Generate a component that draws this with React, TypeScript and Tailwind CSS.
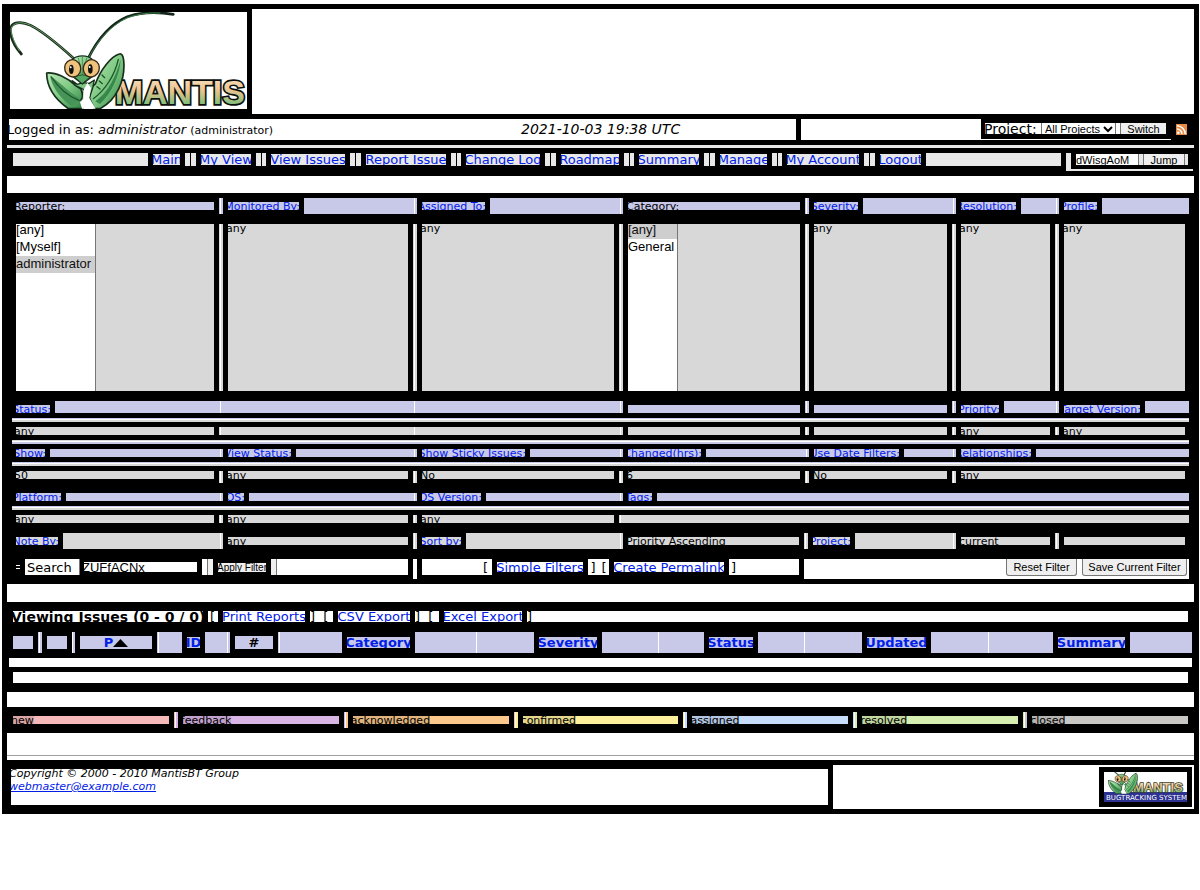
import React from "react";

type Kids = { children?: React.ReactNode; className?: string };

const LAV = "bg-[#c8c8e8]";
const GREY = "bg-[#d8d8d8]";

/* Text set in a tight box that crops it on every side */
function Tag({ children, className = "" }: Kids) {
  return (
    <div className={`overflow-hidden border-l-[5px] border-black ${className}`}>
      <div className="-indent-0.5 flex h-full items-center whitespace-nowrap">
        <span>{children}</span>
      </div>
    </div>
  );
}

function LinkTag({ children, className = "" }: Kids) {
  return (
    <div className={`overflow-hidden border-l-[5px] border-black ${className}`}>
      <div className="flex h-full items-center justify-center whitespace-nowrap">
        <a href="#" className="text-[#0020e8]">
          {children}
        </a>
      </div>
    </div>
  );
}

/* Filter heading, aligned on its closing colon */
function Label({ children, className = "" }: Kids) {
  return (
    <div className={`overflow-hidden border-l-[5px] border-black ${className}`}>
      <div className="-mr-px flex h-full items-center justify-end whitespace-nowrap">
        <a href="#" className="text-[#0020e8]">
          {children}
        </a>
      </div>
    </div>
  );
}

/* Filled stretch that ends in a white hairline */
function Fill({ className = "", gap = true, line = true }: { className?: string; gap?: boolean; line?: boolean }) {
  return (
    <div className={`flex justify-end overflow-hidden border-black ${gap ? "border-l-[5px]" : ""} ${className}`}>
      {line && <i className="w-[3px] border-l border-white" />}
    </div>
  );
}

function Row({ children, className = "" }: Kids) {
  return <div className={`grid pl-[9px] pr-2.5 text-[11px] leading-none ${className}`}>{children}</div>;
}

const PLAIN =
  "grid-cols-[203fr_9fr_185fr_9fr_197fr_9fr_177fr_9fr_138fr_9fr_94fr_9fr_126fr_4fr]";

function Thin({ top, bottom }: { top: string; bottom: string }) {
  return (
    <div className="mx-2.5 mt-[5px] h-1">
      <div className={`h-px ${top}`} />
      <div className="h-px bg-white" />
      <div className={`h-0.5 ${bottom}`} />
    </div>
  );
}

function Mantis() {
  return (
    <g strokeLinejoin="round" strokeLinecap="round">
      <path d="M222 176C180 138 132 96 92 76C62 62 34 66 31 88C31 118 48 144 64 162" fill="none" stroke="#1c2a1c" strokeWidth="8" />
      <path d="M222 176C180 138 132 96 92 76C62 62 36 68 33 88C35 112 48 138 58 152" fill="none" stroke="#5d9c62" strokeWidth="3" />
      <path d="M263 178C292 118 330 72 382 50C430 34 478 36 520 43" fill="none" stroke="#14251a" strokeWidth="8" />
      <path d="M264 176C294 120 332 76 382 53C420 40 450 38 480 39" fill="none" stroke="#3c8048" strokeWidth="3" />
      <path d="M140 219C166 216 204 234 227 257L243 267L250 293L243 298L250 326H205C174 304 140 268 140 219Z" fill="url(#leaf)" stroke="#17301c" strokeWidth="5" />
      <path d="M151 228C180 246 210 282 242 296L216 318C190 304 154 262 151 228Z" fill="#469457" />
      <path d="M154 231C180 270 208 290 238 302" fill="none" stroke="#1b5429" strokeWidth="4" />
      <path d="M358 162C334 168 301 210 286 252L273 264L268 294L283 326H300C350 300 377 240 371 181C370 167 365 160 358 162Z" fill="url(#leaf)" stroke="#17301c" strokeWidth="5" />
      <path d="M362 178C360 222 336 280 300 312L286 304C326 278 350 224 362 178Z" fill="#35874a" />
      <path d="M355 178C344 226 316 270 280 296M306 225l8 8M298 243l9 8M291 260l9 7" fill="none" stroke="#1b5429" strokeWidth="4" />
      <path d="M216 242L232 253L249 248L268 250L283 240L278 264L268 294L283 326L259 300L244 307L250 268L227 257Z" fill="#7fc585" stroke="#17301c" strokeWidth="4" />
      <path d="M250 272L262 248L273 264L268 294L287 326H246L240 306L250 296Z" fill="#fff" />
      <path d="M218 178C232 164 263 165 276 178L276 230L247 252L221 232Z" fill="url(#leaf)" stroke="#17301c" strokeWidth="4" />
      <path d="M247 170V226M235 174Q243 196 243 224M260 174Q252 196 252 224" fill="none" stroke="#26733a" strokeWidth="2" />
      <path d="M225 230Q246 220 271 230L247 250Z" fill="#55a962" stroke="#17301c" strokeWidth="2" />
      <ellipse cx="218" cy="205" rx="24" ry="26" transform="rotate(-18 218 205)" fill="#efc37b" stroke="#382716" strokeWidth="4" />
      <ellipse cx="274" cy="205" rx="24" ry="26" transform="rotate(18 274 205)" fill="#efc37b" stroke="#382716" strokeWidth="4" />
      <ellipse cx="214" cy="208" rx="7" ry="14" fill="#111" />
      <ellipse cx="271" cy="207" rx="7" ry="14" fill="#111" />
      <circle cx="212" cy="202" r="3" fill="#fff" />
      <circle cx="269" cy="201" r="3" fill="#fff" />
    </g>
  );
}

function Defs() {
  return (
    <defs>
      <linearGradient id="leaf" x1="0" y1="0" x2="1" y2="1">
        <stop offset="0" stopColor="#b9e8b6" />
        <stop offset=".5" stopColor="#80c984" />
        <stop offset="1" stopColor="#2f8345" />
      </linearGradient>
      <linearGradient id="word" x1="0" y1="0" x2="0" y2="1">
        <stop offset=".15" stopColor="#f6dcb8" />
        <stop offset=".45" stopColor="#edc491" />
        <stop offset=".85" stopColor="#78bd79" />
      </linearGradient>
    </defs>
  );
}

function Logo() {
  return (
    <svg viewBox="30 36 711 291" className="h-[97px] w-[237px] bg-white" role="img" aria-label="Mantis">
      <Defs />
      <text x="344" y="312" fontFamily="Liberation Sans, sans-serif" fontWeight="bold" fontSize="102" fill="url(#word)" stroke="#0b0f0b" strokeWidth="10" paintOrder="stroke">
        MANTIS
      </text>
      <Mantis />
    </svg>
  );
}

function SmallLogo() {
  return (
    <svg viewBox="0 0 83 30" className="h-[30px] w-[83px] bg-white" role="img" aria-label="Mantis Bugtracking System">
      <rect y="20" width="83" height="10" fill="#2c3192" />
      <text x="29" y="20" fontFamily="Liberation Sans, sans-serif" fontWeight="bold" fontSize="13" fill="url(#word)" stroke="#39452f" strokeWidth="1.6" paintOrder="stroke">
        MANTIS
      </text>
      <svg x="4" y="0" width="30" height="22" viewBox="138 150 238 178" preserveAspectRatio="none">
        <Mantis />
      </svg>
      <text x="2" y="28" fontFamily="DejaVu Sans, sans-serif" fontSize="7" fill="#fff">
        BUGTRACKING SYSTEM
      </text>
    </svg>
  );
}

const MENU: [string, string][] = [
  ["Main", "w-8"],
  ["My View", "w-[55px]"],
  ["View Issues", "w-[79px]"],
  ["Report Issue", "w-[85px]"],
  ["Change Log", "w-[79px]"],
  ["Roadmap", "w-[63px]"],
  ["Summary", "w-[65px]"],
  ["Manage", "w-[52px]"],
  ["My Account", "w-[77px]"],
  ["Logout", "w-[46px]"],
];

function Bars({ className }: { className: string }) {
  return (
    <span className={`flex h-full justify-center border-l-[5px] border-black bg-[#e8e8e8] ${className}`}>
      <i className="w-px bg-black" />
    </span>
  );
}

const STATUSES: [string, string, string, string][] = [
  ["new", "bg-[#f5b9b9]", "border-l-[#f5b9b9]", "border-r-[#f5b9b9]"],
  ["feedback", "bg-[#d9b5e5]", "border-l-[#d9b5e5]", "border-r-[#d9b5e5]"],
  ["acknowledged", "bg-[#fac98b]", "border-l-[#fac98b]", "border-r-[#fac98b]"],
  ["confirmed", "bg-[#fff09c]", "border-l-[#fff09c]", "border-r-[#fff09c]"],
  ["assigned", "bg-[#c6dcfb]", "border-l-[#c6dcfb]", "border-r-[#c6dcfb]"],
  ["resolved", "bg-[#d7f0b1]", "border-l-[#d7f0b1]", "border-r-[#d7f0b1]"],
  ["closed", "bg-[#c9c8c4]", "border-l-[#c9c8c4]", "border-r-[#c9c8c4]"],
];

function Header() {
  return (
    <header>
      <div className="flex h-[105px] pl-[5px] pr-[5px]">
        <div className="w-[245px] shrink-0 pl-[3px] pt-[3px]">
          <Logo />
        </div>
        <div className="flex-1 bg-white" />
      </div>

      <div className="mt-[5px] grid h-[21px] grid-cols-[787fr_403fr] pl-[7px]">
        <div className="grid grid-cols-[512fr_275fr] items-center overflow-hidden bg-white text-[13px] whitespace-nowrap">
          <div className="-indent-0.5">
            Logged in as: <em>administrator</em> <span className="text-[11px]">(administrator)</span>
          </div>
          <em className="text-[14px]">2021-10-03 19:38 UTC</em>
        </div>
        <div className="flex border-l-[5px] border-black">
          <form className="flex flex-1 border-b border-white">
            <div className="flex-1 bg-white" />
            <div className="mt-1 flex h-[11px] self-start pl-1">
              <label htmlFor="project" className="-indent-px flex w-14 items-center overflow-hidden bg-white text-[14px] leading-none">
                Project:
              </label>
              <div className="grid w-[75px] overflow-hidden border-x border-[#767676] bg-white">
                <select id="project" className="col-start-1 row-start-1 mt-px h-[11px] appearance-none pl-[3px] font-['Liberation_Sans'] text-[11px] leading-none">
                  <option>All Projects</option>
                </select>
                <svg viewBox="0 0 10 7" className="pointer-events-none col-start-1 row-start-1 mr-0.5 h-[7px] w-2.5 self-center justify-self-end">
                  <path d="M1 1l4 4 4-4" fill="none" stroke="#000" strokeWidth="2" />
                </svg>
              </div>
              <span className="w-[5px] border-r border-[#767676] bg-white" />
              <button type="button" className="flex w-[45px] items-center justify-center overflow-hidden bg-[#efefef] pt-px font-['Liberation_Sans'] text-[11px] leading-none">
                Switch
              </button>
              <i className="w-[5px]" />
            </div>
          </form>
          <a href="#" aria-label="RSS" className="mr-3 ml-[5px] mt-[5px] h-[11px] w-[11px]">
            <svg viewBox="0 0 11 11" className="h-[11px] w-[11px] bg-[#e98a45]">
              <circle cx="2.3" cy="8.8" r="1.3" fill="#fff" />
              <path d="M1 5a5 5 0 0 1 5 5M1 1.8a8.200 8.200 0 0 1 8.200 8.200" fill="none" stroke="#fff" strokeWidth="1.500" />
            </svg>
          </a>
        </div>
      </div>

      <div className="mx-[5px] mt-[5px] h-[3px] bg-[#e8e8e8]" />

      <div className="mt-[5px] flex h-[18px] pr-1.5 pl-[11px]">
        <nav className="flex h-[13px] flex-1 text-[13px] leading-none">
          <span className="flex-1 bg-[#e8e8e8]" />
          {MENU.map(([name, width], i) => (
            <React.Fragment key={name}>
              {i > 0 && <Bars className={i % 2 ? "w-4" : "w-[15px]"} />}
              <LinkTag className={`my-px bg-[#e8e8e8] ${width}`}>{name}</LinkTag>
            </React.Fragment>
          ))}
          <span className="flex-1 border-l-[5px] border-black bg-[#e8e8e8]" />
        </nav>
        <form className="ml-[5px] flex w-[127px] border-b-2 border-l-[5px] border-[#e8e8e8] pl-[5px]">
          <input aria-label="Issue number" defaultValue="dWisgAoM" className="mt-px h-[11px] w-[62px] bg-white font-['Liberation_Sans'] text-[11px] leading-none outline-none" />
          <span className="mt-px h-[11px] w-1.5 border-x border-[#767676] bg-[#e8e8e8]" />
          <button type="button" className="mt-px flex h-[11px] w-10 items-center justify-center bg-[#efefef] pt-px font-['Liberation_Sans'] text-[11px] leading-none">
            Jump
          </button>
          <span className="mt-px h-[11px] w-1 border-l border-[#767676] bg-[#e8e8e8]" />
        </form>
      </div>
      <div className="mx-[5px] mt-[5px] h-[17px] bg-white" />
    </header>
  );
}

function ListCell({ label, options, selected, className }: { label: string; options: string[]; selected: string; className: string }) {
  return (
    <div className="flex overflow-hidden border-l-[5px] border-black bg-[#d8d8d8]">
      <select
        multiple
        aria-label={label}
        defaultValue={[selected]}
        className={`-mt-0.5 h-[169px] shrink-0 appearance-none overflow-hidden border-r border-[#767676] bg-white font-['Liberation_Sans'] text-[13px] outline-none ${className}`}
      >
        {options.map((o) => (
          <option key={o} className="h-[17px] p-0 leading-[17px]">
            {o}
          </option>
        ))}
      </select>
    </div>
  );
}

function Filters() {
  const any = `${GREY} h-full`;
  const lab = `${LAV} my-1`;
  return (
    <section>
      <Row className="mt-[5px] h-4 grid-cols-[203fr_9fr_76fr_118fr_68fr_138fr_177fr_9fr_49fr_98fr_60fr_43fr_38fr_92fr]">
        <Tag className={lab}>Reporter:</Tag>
        <Fill className={LAV} />
        <Label className={lab}>Monitored By:</Label>
        <Fill className={LAV} />
        <Label className={lab}>Assigned To:</Label>
        <Fill className={LAV} />
        <Tag className={lab}>Category:</Tag>
        <Fill className={LAV} />
        <Label className={lab}>Severity:</Label>
        <Fill className={LAV} />
        <Label className={lab}>Resolution:</Label>
        <Fill className={LAV} />
        <Label className={lab}>Profile:</Label>
        <Fill className={LAV} line={false} />
      </Row>

      <Row className={`mt-2.5 h-[167px] ${PLAIN}`}>
        <ListCell label="Reporter" options={["[any]", "[Myself]", "administrator"]} selected="administrator" className="w-20" />
        <Fill className={GREY} />
        <Tag className={`${GREY} pb-[159px]`}>any</Tag>
        <Fill className={GREY} />
        <Tag className={`${GREY} pb-[159px]`}>any</Tag>
        <Fill className={GREY} />
        <ListCell label="Category" options={["[any]", "General"]} selected="[any]" className="w-[50px]" />
        <Fill className={GREY} />
        <Tag className={`${GREY} pb-[159px]`}>any</Tag>
        <Fill className={GREY} />
        <Tag className={`${GREY} pb-[159px]`}>any</Tag>
        <Fill className={GREY} />
        <Tag className={`${GREY} pb-[159px]`}>any</Tag>
      </Row>

      <Row className="mt-2.5 h-3 grid-cols-[39fr_173fr_194fr_206fr_177fr_9fr_138fr_9fr_43fr_60fr_81fr_49fr]">
        <Label className={`${LAV} mt-1`}>Status:</Label>
        <Fill className={LAV} />
        <Fill className={LAV} gap={false} />
        <Fill className={LAV} gap={false} />
        <Tag className={`${LAV} mt-1`} />
        <Fill className={LAV} />
        <Tag className={`${LAV} mt-1`} />
        <Fill className={LAV} />
        <Label className={`${LAV} mt-1`}>Priority:</Label>
        <Fill className={LAV} />
        <Label className={`${LAV} mt-1`}>Target Version:</Label>
        <Fill className={LAV} line={false} />
      </Row>
      <Thin top={LAV} bottom={GREY} />
      <Row className="mt-[5px] h-2 grid-cols-[203fr_9fr_194fr_206fr_177fr_9fr_138fr_9fr_94fr_9fr_126fr_4fr]">
        <Tag className={any}>any</Tag>
        <Fill className={GREY} />
        <Fill className={GREY} gap={false} />
        <Fill className={GREY} gap={false} />
        <Tag className={any} />
        <Fill className={GREY} />
        <Tag className={any} />
        <Fill className={GREY} />
        <Tag className={any}>any</Tag>
        <Fill className={GREY} />
        <Tag className={any}>any</Tag>
      </Row>
      <Thin top={GREY} bottom={LAV} />
      <Row className="mt-[5px] h-2 grid-cols-[34fr_178fr_68fr_126fr_108fr_98fr_78fr_108fr_90fr_57fr_75fr_158fr]">
        <Label className={LAV}>Show:</Label>
        <Fill className={LAV} />
        <Label className={LAV}>View Status:</Label>
        <Fill className={LAV} />
        <Label className={LAV}>Show Sticky Issues:</Label>
        <Fill className={LAV} />
        <Label className={LAV}>Changed(hrs):</Label>
        <Fill className={LAV} />
        <Label className={LAV}>Use Date Filters:</Label>
        <Fill className={LAV} />
        <Label className={LAV}>Relationships:</Label>
        <Fill className={LAV} line={false} />
      </Row>
      <Thin top={LAV} bottom={GREY} />
      <Row className="mt-[5px] h-3 grid-cols-[203fr_9fr_185fr_9fr_197fr_9fr_177fr_9fr_138fr_9fr_229fr_4fr]">
        <Tag className={`${GREY} mb-1`}>50</Tag>
        <Fill className={GREY} />
        <Tag className={`${GREY} mb-1`}>any</Tag>
        <Fill className={GREY} />
        <Tag className={`${GREY} mb-1`}>No</Tag>
        <Fill className={GREY} />
        <Tag className={`${GREY} mb-1`}>6</Tag>
        <Fill className={GREY} />
        <Tag className={`${GREY} mb-1`}>No</Tag>
        <Fill className={GREY} />
        <Tag className={`${GREY} mb-1`}>any</Tag>
      </Row>
      <Row className="mt-2.5 h-2 grid-cols-[50fr_162fr_21fr_173fr_64fr_142fr_29fr_537fr]">
        <Label className={LAV}>Platform:</Label>
        <Fill className={LAV} />
        <Label className={LAV}>OS:</Label>
        <Fill className={LAV} />
        <Label className={LAV}>OS Version:</Label>
        <Fill className={LAV} />
        <Label className={LAV}>Tags:</Label>
        <Fill className={LAV} line={false} />
      </Row>
      <Thin top={LAV} bottom={GREY} />
      <Row className="mt-[5px] h-2 grid-cols-[203fr_9fr_185fr_9fr_197fr_9fr_566fr]">
        <Tag className={any}>any</Tag>
        <Fill className={GREY} />
        <Tag className={any}>any</Tag>
        <Fill className={GREY} />
        <Tag className={any}>any</Tag>
        <Fill className={GREY} />
        <Fill className={GREY} gap={false} line={false} />
      </Row>
      <Row className="mt-2.5 h-4 grid-cols-[47fr_165fr_185fr_9fr_44fr_162fr_176fr_9fr_42fr_106fr_94fr_9fr_126fr_4fr]">
        <Label className={`${GREY} my-1`}>Note By:</Label>
        <Fill className={GREY} />
        <Tag className={`${GREY} my-1`}>any</Tag>
        <Fill className={GREY} />
        <Label className={`${GREY} my-1`}>Sort by:</Label>
        <Fill className={GREY} />
        <Tag className={`${GREY} my-1`}>Priority Ascending</Tag>
        <Fill className={GREY} />
        <Label className={`${GREY} my-1`}>Project:</Label>
        <Fill className={GREY} />
        <Tag className={`${GREY} my-1`}>current</Tag>
        <Fill className={GREY} />
        <Tag className={`${GREY} my-1`} />
      </Row>

      <form className="mt-2.5 grid h-5 grid-cols-[392fr_9fr_382fr_390fr] pr-2.5 pl-3.5 text-[13px] leading-none">
        <div className="flex h-4 overflow-hidden">
          <span className="flex w-[9px] shrink-0 items-center bg-black">
            <i className="h-1 w-1 border-y border-white" />
          </span>
          <label htmlFor="search" className="flex w-[55px] shrink-0 items-center border-r border-[#767676] bg-white pl-0.5">
            Search
          </label>
          <input id="search" defaultValue="ZUFfACNx" className="-indent-0.5 my-[3px] ml-1 h-2.5 w-[113px] shrink-0 bg-white font-['Liberation_Sans'] text-[13px] leading-none outline-none" />
          <span className="ml-[5px] w-1.5 shrink-0 border-r border-[#767676] bg-white" />
          <span className="w-[5px] shrink-0 bg-[#efefef]" />
          <button type="button" className="my-1 ml-[5px] flex h-[9px] w-12 shrink-0 items-center justify-center overflow-hidden bg-[#efefef] font-['Liberation_Sans'] text-[10px] leading-none whitespace-nowrap">
            Apply Filter
          </button>
          <span className="ml-[5px] w-1.5 shrink-0 border-r border-[#767676] bg-[#efefef]" />
          <span className="flex-1 bg-white" />
        </div>
        <div className="border-l-[5px] border-black bg-white" />
        <div className="flex h-4">
          <span className="flex flex-1 items-center justify-end border-l-[5px] border-black bg-white pr-1">[</span>
          <LinkTag className="my-[3px] w-[91px] bg-white">Simple Filters</LinkTag>
          <span className="flex w-[26px] items-center justify-center gap-1.5 border-l-[5px] border-black bg-white">
            <b className="font-normal">]</b>
            <b className="font-normal">[</b>
          </span>
          <LinkTag className="my-[3px] w-[115px] bg-white">Create Permalink</LinkTag>
          <span className="flex w-[75px] items-center border-l-[5px] border-black bg-white pl-0.5">]</span>
        </div>
        <div className="flex items-start justify-end gap-[5px] overflow-hidden border-l-[5px] border-black bg-white pr-0.5 font-['Liberation_Sans'] text-[11px]">
          <button type="button" className="h-[17px] w-[71px] rounded-b-[3px] border border-t-0 border-[#767676] bg-[#efefef]">
            Reset Filter
          </button>
          <button type="button" className="h-[17px] w-[105px] rounded-b-[3px] border border-t-0 border-[#767676] bg-[#efefef]">
            Save Current Filter
          </button>
        </div>
      </form>
    </section>
  );
}

function Th({ children, className = "" }: Kids) {
  return (
    <div className={`overflow-hidden border-l-[5px] border-black ${LAV} ${className}`}>
      <div className="flex h-full items-center justify-center">{children}</div>
    </div>
  );
}

/* Header filler with a column rule at the end of its first part */
function Split({ className }: { className: string }) {
  return (
    <div className={`grid overflow-hidden border-l-[5px] border-black ${LAV} ${className}`}>
      <i className="border-r border-white" />
    </div>
  );
}

function Issues() {
  return (
    <section>
      <div className="mx-[5px] mt-[5px] h-[18px] bg-white" />
      <div className="mt-[9px] flex h-[11px] pr-[11px] pl-1.5 text-[13px] leading-none">
        <Tag className="w-[195px] bg-white text-[14px] font-bold">Viewing Issues (0 - 0 / 0)</Tag>
        <Tag className="w-[15px] bg-white pl-1">[</Tag>
        <LinkTag className="w-[87px] bg-white">Print Reports</LinkTag>
        <Tag className="w-7 bg-white pl-0.5">] &nbsp;[</Tag>
        <LinkTag className="w-[77px] bg-white">CSV Export</LinkTag>
        <Tag className="w-[29px] bg-white pl-0.5">] &nbsp;[</Tag>
        <LinkTag className="w-[83px] bg-white">Excel Export</LinkTag>
        <Tag className="flex-1 bg-white pl-0.5">]</Tag>
      </div>
      <div className="mt-2.5 grid h-[21px] grid-cols-[25fr_9fr_25fr_8fr_77fr_30fr_18fr_30fr_43fr_69fr_68fr_124fr_63fr_107fr_49fr_109fr_64fr_127fr_72fr_67fr] pr-[7px] pl-1.5 text-[13px] leading-none font-bold">
        <Th className="my-1" />
        <Fill className={LAV} />
        <Th className="my-1" />
        <Fill className={LAV} />
        <Th className="my-1">
          <a href="#" className="text-[#0020e8]">P</a>
          <svg viewBox="0 0 15 8" className="h-2 w-[15px]">
            <path d="M7.500 0L15 8H0z" />
          </svg>
        </Th>
        <Split className="grid-cols-[2px]" />
        <LinkTag className={`my-[5px] ${LAV}`}>ID</LinkTag>
        <Fill className={LAV} />
        <Th className="my-1">#</Th>
        <Split className="grid-cols-[2px]" />
        <LinkTag className={`my-[5px] ${LAV}`}>Category</LinkTag>
        <Split className="grid-cols-[62fr_57fr]" />
        <LinkTag className={`my-[5px] ${LAV}`}>Severity</LinkTag>
        <Split className="grid-cols-[57fr_45fr]" />
        <LinkTag className={`my-[5px] ${LAV}`}>Status</LinkTag>
        <Split className="grid-cols-[47fr_57fr]" />
        <LinkTag className={`my-[5px] ${LAV}`}>Updated</LinkTag>
        <Split className="grid-cols-[58fr_64fr]" />
        <LinkTag className={`my-[5px] ${LAV}`}>Summary</LinkTag>
        <Fill className={LAV} line={false} />
      </div>
      <div className="mt-[5px] mr-[7px] ml-[7px] h-[9px] bg-white" />
      <div className="mx-[11px] mt-[5px] h-[11px] bg-white" />
      <div className="mx-[5px] mt-[9px] h-[15px] bg-white" />
      <div className="mt-[5px] flex h-4 pr-[11px] pl-1.5 text-[11px] leading-none">
        {STATUSES.map(([name, bg, , right], i) => (
          <React.Fragment key={name}>
            {i > 0 && <i className={`ml-[5px] w-1 border-l border-r-2 bg-white ${STATUSES[i - 1][2]} ${right}`} />}
            <Tag className={`my-1 flex-1 ${bg}`}>
              <span className="bg-black/10">{name}</span>
            </Tag>
          </React.Fragment>
        ))}
      </div>
      <div className="mx-[5px] mt-[5px] h-[27px] bg-white pt-[22px]">
        <hr className="border-[#a0a0a0]" />
      </div>
    </section>
  );
}

export default function App() {
  return (
    <div className="min-h-screen bg-white pt-1 pr-px pl-0.5 font-['DejaVu_Sans',sans-serif] text-black">
      <main className="bg-black pt-[5px] pb-[5px]">
        <Header />
        <Filters />
        <Issues />
        <footer className="mt-[5px] grid h-11 grid-cols-[817fr_366fr] pr-[5px] pl-[9px]">
          <address className="-indent-0.5 my-1 overflow-hidden bg-white text-[11px] leading-[13px] whitespace-nowrap">
            <div className="-mt-0.5">Copyright © 2000 - 2010 MantisBT Group</div>
            <div>
              <a href="#" className="text-[#0020e8] underline">
                webmaster@example.com
              </a>
            </div>
          </address>
          <div className="flex items-center justify-end border-l-[5px] border-black bg-white pr-0.5">
            <div className="bg-black p-[5px]">
              <SmallLogo />
            </div>
          </div>
        </footer>
      </main>
    </div>
  );
}
